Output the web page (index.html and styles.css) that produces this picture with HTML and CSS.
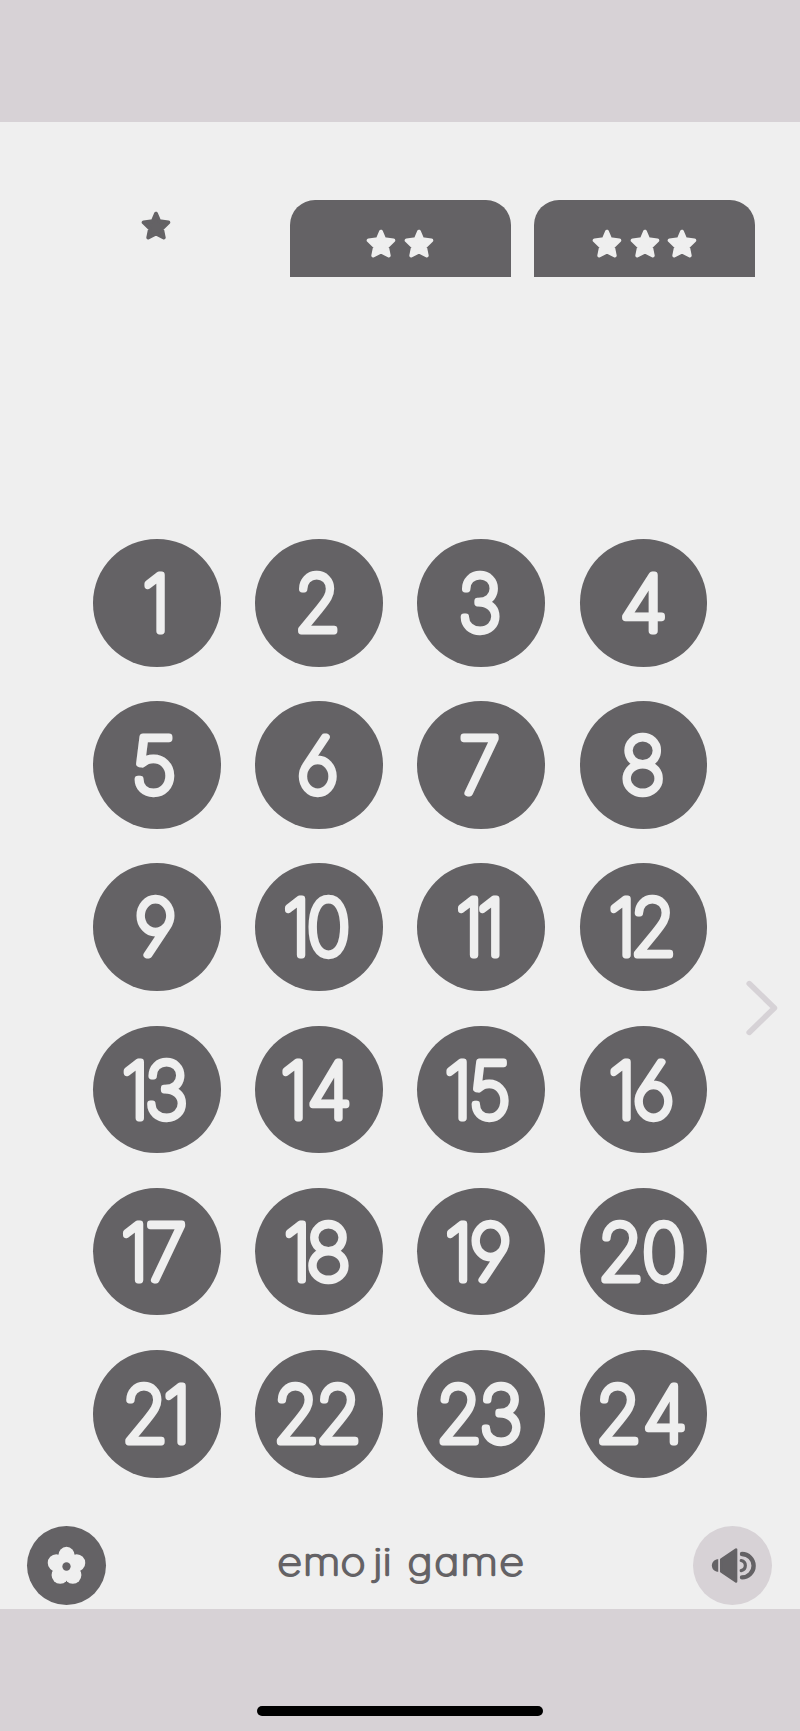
FILE: index.html
```
<!DOCTYPE html>
<html lang="en">
<head>
<meta charset="utf-8">
<title>emoji game</title>
<link rel="stylesheet" href="styles.css">
</head>
<body>
<svg class="defs" width="0" height="0" aria-hidden="true">
  <symbol id="star" viewBox="0 0 30 30">
    <path d="M15 2.6 L18.3 10.2 L27.4 11.4 L21 17.6 L22.8 26.6 L15 22.6 L7.2 26.6 L9 17.6 L2.6 11.4 L11.7 10.2 Z" fill="currentColor" stroke="currentColor" stroke-width="3.8" stroke-linejoin="round"/>
  </symbol>
</svg>
<main class="game">
  <nav class="tabs">
    <button class="tab tab-active" aria-label="one star"><svg class="star"><use href="#star"/></svg></button>
    <button class="tab" aria-label="two stars"><svg class="star"><use href="#star"/></svg><svg class="star"><use href="#star"/></svg></button>
    <button class="tab" aria-label="three stars"><svg class="star"><use href="#star"/></svg><svg class="star"><use href="#star"/></svg><svg class="star"><use href="#star"/></svg></button>
  </nav>
  <section class="board">
    <div class="levels">
      <button class="level"><svg viewBox="-64 -64 128 128"><text y="27.8" x="-14.8">1</text></svg></button>
      <button class="level"><svg viewBox="-64 -64 128 128"><text y="27.8" x="-25.2">2</text></svg></button>
      <button class="level"><svg viewBox="-64 -64 128 128"><text y="27.8" x="-23.4">3</text></svg></button>
      <button class="level"><svg viewBox="-64 -64 128 128"><text class="wide" y="27.8" x="-23.3">4</text></svg></button>
      <button class="level"><svg viewBox="-64 -64 128 128"><text class="wide" y="27.8" x="-24.4">5</text></svg></button>
      <button class="level"><svg viewBox="-64 -64 128 128"><text y="27.8" x="-22.7">6</text></svg></button>
      <button class="level"><svg viewBox="-64 -64 128 128"><text y="27.8" x="-22.3">7</text></svg></button>
      <button class="level"><svg viewBox="-64 -64 128 128"><text y="27.8" x="-24">8</text></svg></button>
      <button class="level"><svg viewBox="-64 -64 128 128"><text y="27.8" x="-23.1">9</text></svg></button>
      <button class="level"><svg viewBox="-64 -64 128 128"><text y="27.8" x="-37 -12.7">10</text></svg></button>
      <button class="level"><svg viewBox="-64 -64 128 128"><text y="27.8" x="-25.6 -3.6">11</text></svg></button>
      <button class="level"><svg viewBox="-64 -64 128 128"><text y="27.8" x="-36.6 -14">12</text></svg></button>
      <button class="level"><svg viewBox="-64 -64 128 128"><text y="27.8" x="-36.3 -12.6">13</text></svg></button>
      <button class="level"><svg viewBox="-64 -64 128 128"><text y="27.8" x="-39.6 -12">14</text></svg></button>
      <button class="level"><svg viewBox="-64 -64 128 128"><text y="27.8" x="-37.6 -12.4">15</text></svg></button>
      <button class="level"><svg viewBox="-64 -64 128 128"><text y="27.8" x="-36.6 -11.7">16</text></svg></button>
      <button class="level"><svg viewBox="-64 -64 128 128"><text y="27.8" x="-37 -11.5">17</text></svg></button>
      <button class="level"><svg viewBox="-64 -64 128 128"><text y="27.8" x="-36.3 -13.1">18</text></svg></button>
      <button class="level"><svg viewBox="-64 -64 128 128"><text y="27.8" x="-37 -11.8">19</text></svg></button>
      <button class="level"><svg viewBox="-64 -64 128 128"><text y="27.8" x="-47.5 -2.2">20</text></svg></button>
      <button class="level"><svg viewBox="-64 -64 128 128"><text y="27.8" x="-36.2 7">21</text></svg></button>
      <button class="level"><svg viewBox="-64 -64 128 128"><text y="27.8" x="-47 -3.4">22</text></svg></button>
      <button class="level"><svg viewBox="-64 -64 128 128"><text y="27.8" x="-46.4 -1.5">23</text></svg></button>
      <button class="level"><svg viewBox="-64 -64 128 128"><text y="27.8" x="-50 -1.2">24</text></svg></button>
    </div>
    <button class="next" aria-label="next page"><svg viewBox="0 0 32 56" width="32" height="56"><path d="M3.2 3.6 L28.4 28 L3.2 52.4" fill="none" stroke="#d6d2d6" stroke-width="5.6" stroke-linecap="round" stroke-linejoin="round"/></svg></button>
  </section>
  <footer class="bar">
    <button class="round round-dark" aria-label="settings">
      <svg viewBox="-40 -40 80 80" width="79" height="79">
        <g fill="#efefef">
          <ellipse cx="0" cy="-9.8" rx="8.4" ry="9.2"/>
          <circle cx="-10.3" cy="-2.6" r="8.7"/><circle cx="10.3" cy="-2.6" r="8.7"/>
          <circle cx="-6.4" cy="9.7" r="8.7"/><circle cx="6.4" cy="9.7" r="8.7"/>
          <circle cx="0" cy="1" r="8"/>
        </g>
        <circle cx="0" cy="1" r="4.2" fill="#646265"/>
        <path d="M-1.6 18.6 L0 15.4 L1.6 18.6 Z" fill="#646265"/>
      </svg>
    </button>
    <svg class="title" width="300" height="79"><text y="48.7" x="22.7 44.1 75.5 102.5 110.4 120.7 131.3 153.5 175.5 207.7">emoji game</text></svg>
    <button class="round round-light" aria-label="sound">
      <svg viewBox="-40 -40 80 80" width="79" height="79" fill="#646265">
        <path d="M-14.4 -6.4 V6.4 C-18 6.4 -20.9 3.8 -20.9 0 S-18 -6.4 -14.4 -6.4 Z"/>
        <path d="M-11.4 -6 L3.6 -16.2 V16.2 L-11.4 6 Z" stroke="#646265" stroke-width="2.6" stroke-linejoin="round"/>
        <path d="M9.6 -11.6 A11.7 11.7 0 0 1 9.6 12" fill="none" stroke="#646265" stroke-width="4.4" stroke-linecap="round"/>
        <path d="M8.8 -5 A5.2 5.2 0 0 1 8.8 5.2" fill="none" stroke="#646265" stroke-width="3.2" stroke-linecap="round"/>
      </svg>
    </button>
  </footer>
</main>
<div class="home"><span class="home-line"></span></div>
</body>
</html>
```
FILE: styles.css
```
* { box-sizing: border-box; }
body {
  margin: 0;
  width: 800px;
  height: 1731px;
  padding-top: 122px;
  background: #d7d2d6;
  font-family: Inter, "Liberation Sans", sans-serif;
  overflow: hidden;
}
button {
  padding: 0;
  border: 0;
  background: none;
  color: inherit;
}
.defs { display: block; }
.game {
  display: flex;
  flex-direction: column;
  height: 1486.5px;
  padding-top: 78px;
  background: #efefef;
}
.tabs {
  display: grid;
  grid-template-columns: repeat(3, 221px);
  column-gap: 23.5px;
  height: 76.7px;
  padding-left: 45px;
}
.tab {
  display: flex;
  justify-content: center;
  gap: 7.6px;
  height: 76.7px;
  padding-top: 28.5px;
  border-radius: 25px 25px 0 0;
  background: #646265;
  color: #efefef;
}
.tab-active {
  padding-top: 11px;
  background: transparent;
  color: #646265;
}
.star { width: 30px; height: 30px; }
.board {
  display: flex;
  align-items: center;
  margin-top: 262.3px;
  padding-left: 93px;
}
.levels {
  display: grid;
  grid-template-columns: repeat(4, 127.6px);
  gap: 34.6px;
}
.level {
  height: 127.6px;
  border-radius: 50%;
  background: #646265;
}
.level svg { display: block; width: 100%; height: 100%; }
.level text {
  font: 100 77px Inter, sans-serif;
  font-feature-settings: "cv03", "cv04";
  fill: #efefef;
  stroke: #efefef;
  stroke-width: 6.9px;
  stroke-linejoin: round;
  transform: scaleX(0.97);
}
.level .wide { transform: scaleX(1.04); }
.next { margin-left: 39px; height: 56px; }
.next svg { display: block; }
.bar {
  display: flex;
  align-items: center;
  justify-content: space-between;
  margin-top: 48.6px;
  padding: 0 27.6px 0 27px;
}
.round {
  width: 79px;
  height: 79px;
  border-radius: 50%;
}
.round svg { display: block; }
.round-dark { background: #646265; }
.round-light { background: #d7d2d6; }
.title { overflow: visible; }
.title text {
  font: 100 36px Inter, sans-serif;
  font-feature-settings: "cv11";
  fill: #646265;
  stroke: #646265;
  stroke-width: 2.3px;
  stroke-linejoin: round;
  transform: scaleX(1.2);
}
.home {
  display: flex;
  justify-content: center;
  padding-top: 97.5px;
}
.home-line {
  width: 286px;
  height: 9.6px;
  border-radius: 5px;
  background: #000;
}
```
